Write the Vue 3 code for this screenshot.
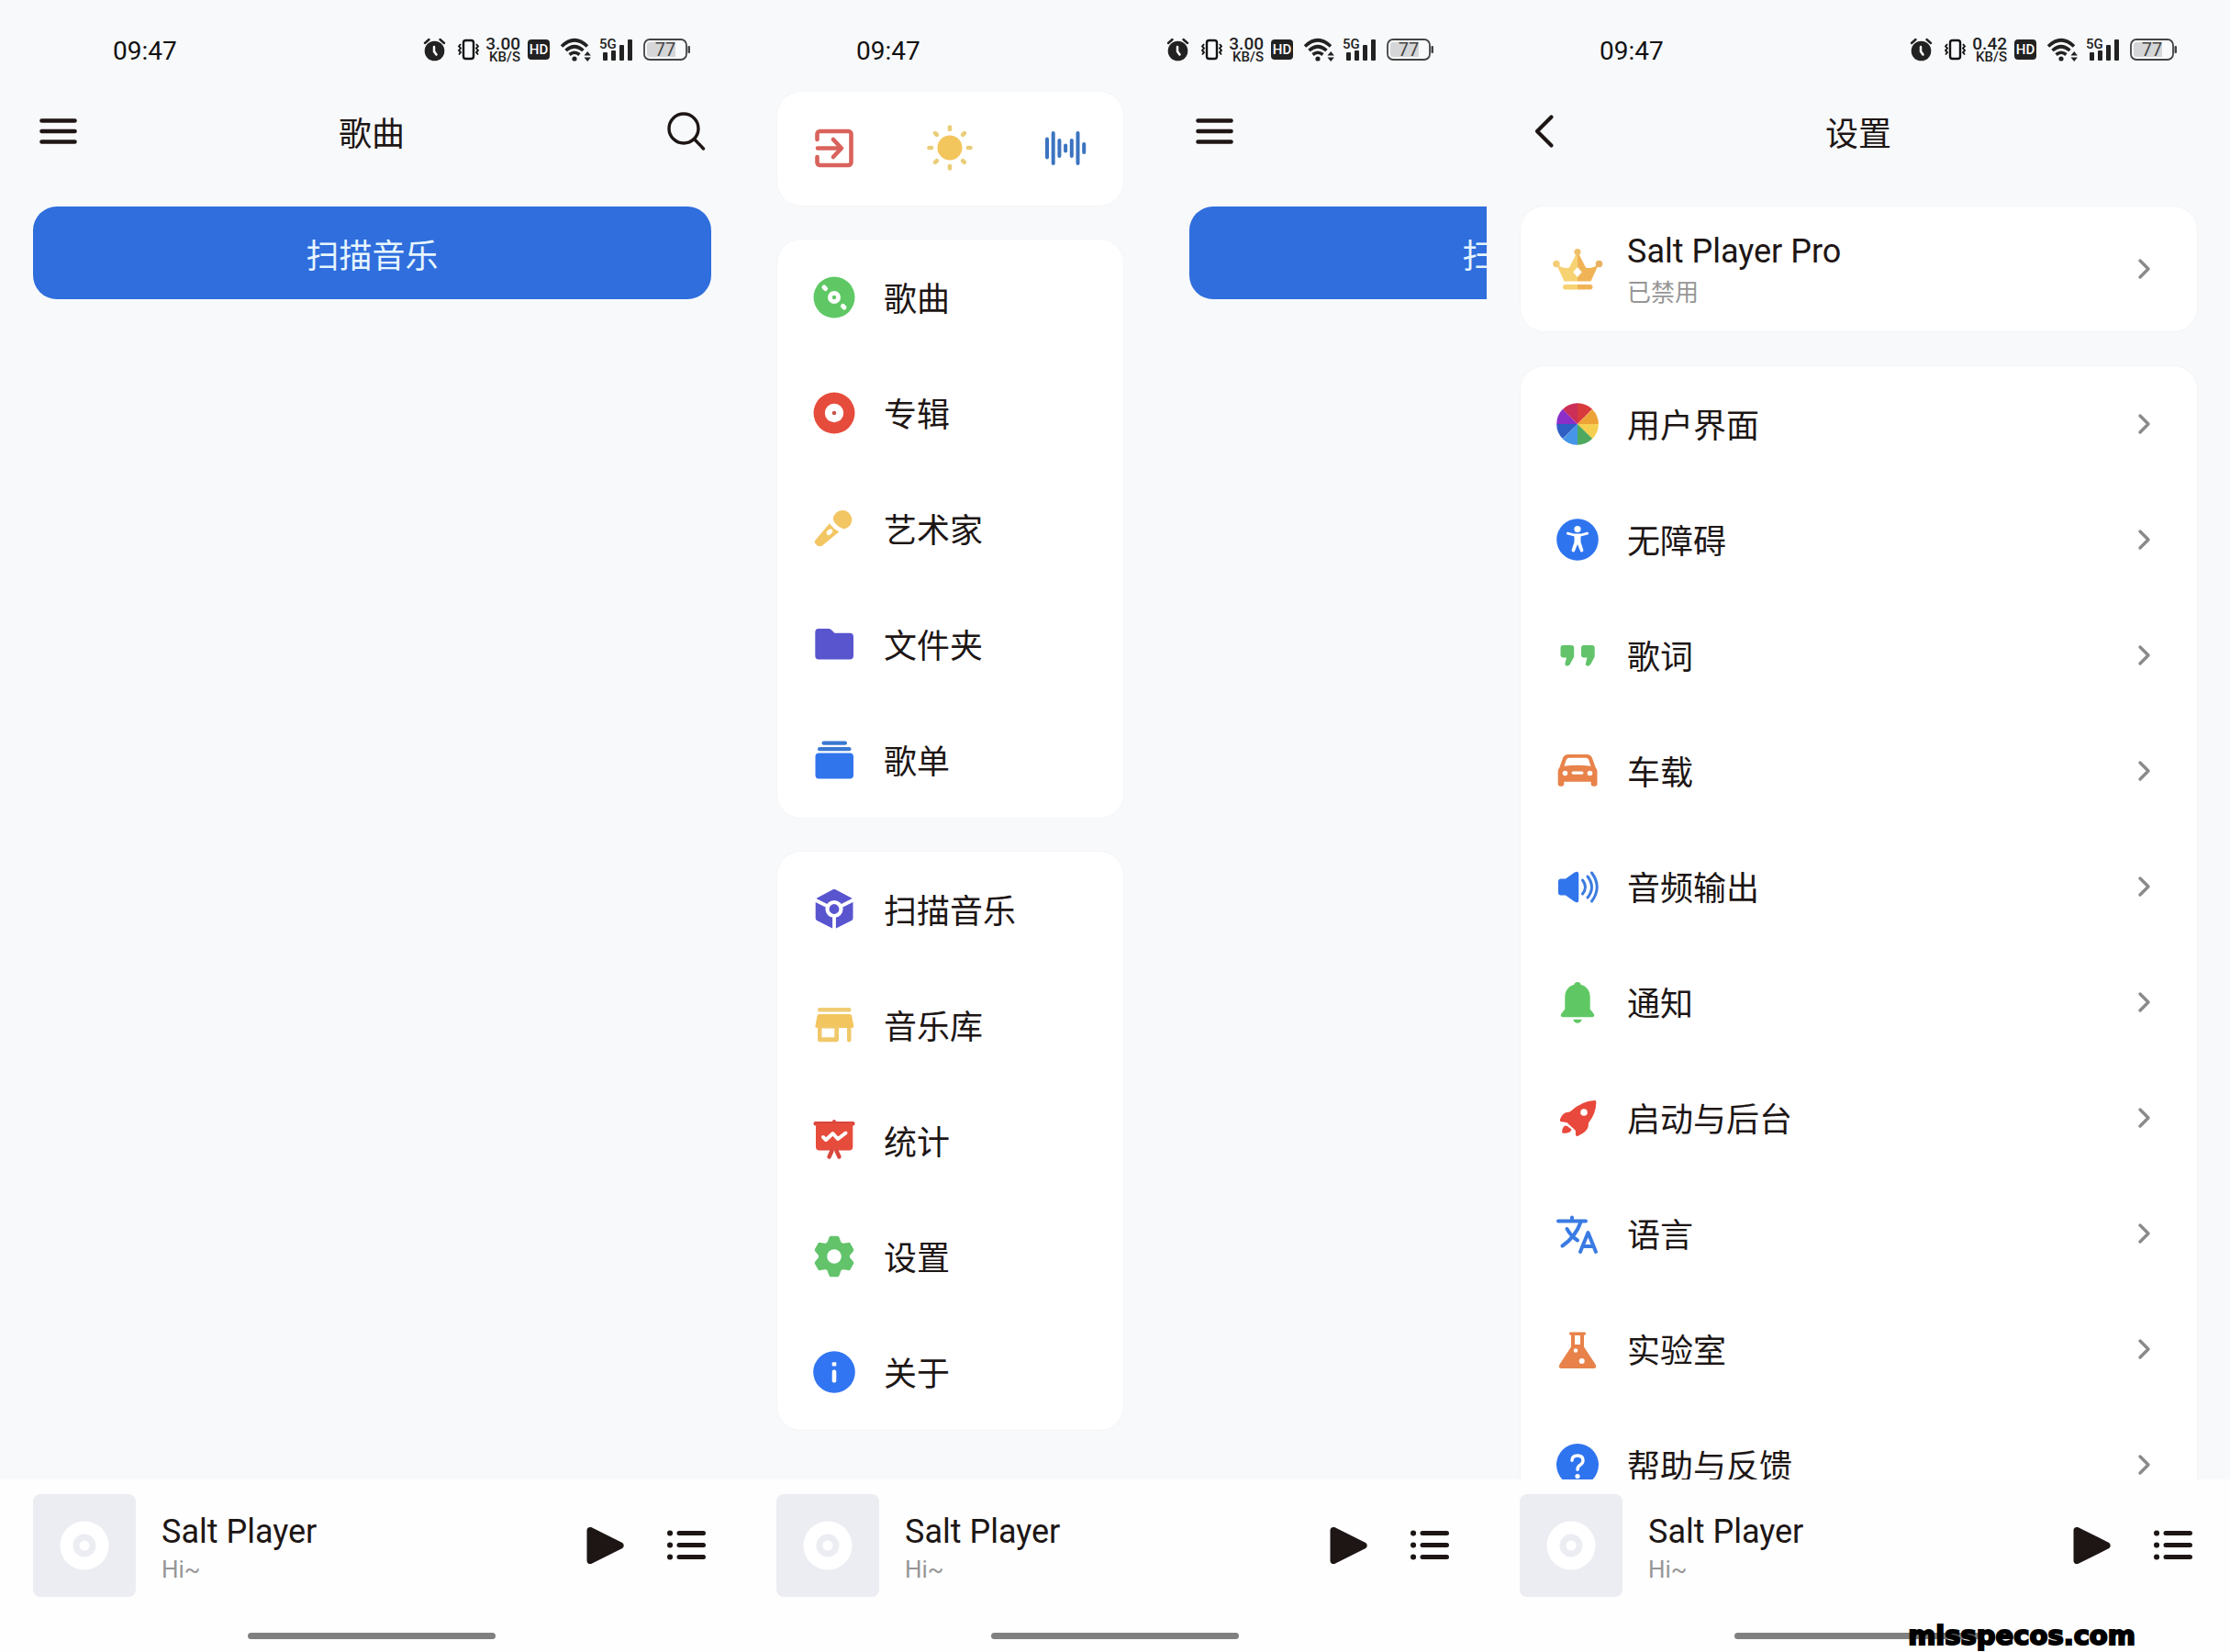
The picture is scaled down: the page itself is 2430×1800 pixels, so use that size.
<script setup>
const phones = [
  { id: 'songs', speed: '3.00' },
  { id: 'drawer', speed: '3.00' },
  { id: 'settings', speed: '0.42' },
]

const quickActions = [
  { icon: 'exit', label: '退出' },
  { icon: 'sun', label: '主题' },
  { icon: 'wave', label: '音效' },
]

const drawerGroups = [
  [
    { icon: 'song', label: '歌曲' },
    { icon: 'album', label: '专辑' },
    { icon: 'mic', label: '艺术家' },
    { icon: 'folder', label: '文件夹' },
    { icon: 'playlist', label: '歌单' },
  ],
  [
    { icon: 'scan', label: '扫描音乐' },
    { icon: 'library', label: '音乐库' },
    { icon: 'stats', label: '统计' },
    { icon: 'gear', label: '设置' },
    { icon: 'info', label: '关于' },
  ],
]

const settings = [
  { icon: 'wheel', label: '用户界面' },
  { icon: 'access', label: '无障碍' },
  { icon: 'quote', label: '歌词' },
  { icon: 'car', label: '车载' },
  { icon: 'speaker', label: '音频输出' },
  { icon: 'bell', label: '通知' },
  { icon: 'rocket', label: '启动与后台' },
  { icon: 'lang', label: '语言' },
  { icon: 'lab', label: '实验室' },
  { icon: 'help', label: '帮助与反馈' },
]

const spin = (step, count, shape) =>
  Array.from({ length: count }, (_, i) => `<g transform="rotate(${i * step} 23 23)">${shape}</g>`).join('')

const wheelColors = ['#d93a3c', '#eda236', '#f7cf50', '#4fa860', '#4596e8', '#2f5fc4', '#8c2fc9', '#cb2f57']
const waveHeights = [24, 37, 21, 10, 21, 37, 13]

// Every icon is drawn in a 46 x 46 box.
const icons = {
  exit: `<g fill="none" stroke="#d9635c" stroke-width="4.6" stroke-linecap="round" stroke-linejoin="round">
    <path d="M4.5 14V8a3 3 0 0 1 3-3h31a3 3 0 0 1 3 3v31a3 3 0 0 1-3 3h-31a3 3 0 0 1-3-3v-6"/>
    <path d="M5 23.5H30M22 14l9 9.500-9 9.500"/></g>`,
  sun: `<circle cx="23" cy="23" r="13.500" fill="#f3c55d"/>` +
    spin(45, 8, '<path d="M23 0.500v2.500" stroke="#e9cd78" stroke-width="4.600" stroke-linecap="round"/>'),
  wave: waveHeights
    .map((h, i) => `<rect x="${1 + i * 6.7}" y="${23.5 - h / 2}" width="4" height="${h}" rx="2" fill="#3b74c0"/>`)
    .join(''),
  song: `<circle cx="23" cy="23" r="22.5" fill="#5fc864"/><circle cx="23" cy="23" r="7" fill="#fff"/><circle cx="23" cy="23" r="2.2" fill="#5fc864"/>
    <path d="M12 12l1.500 1.500M32.500 32.500l1.500 1.500" stroke="#fff" stroke-width="5" stroke-linecap="round"/>`,
  album: `<circle cx="23" cy="23" r="22.5" fill="#e64c3c"/><circle cx="23" cy="23" r="10.2" fill="#fff"/><circle cx="23" cy="23" r="2.3" fill="#c9554b"/>`,
  mic: `<path d="M21.800 12.200A10.300 10.300 0 1 1 35 23.200C30.500 23.500 22.500 17.500 21.800 12.200Z" fill="#f2c662"/>
    <path d="M18 17.200Q22 23.500 28.500 26.200L11 40.800Q7.500 43.800 4 41T2.500 35.500Z" fill="#f2c662"/>
    <ellipse cx="18" cy="26.700" rx="3.800" ry="2.600" transform="rotate(-45 18 26.700)" fill="#fff"/>`,
  folder: `<path d="M6 6h11q2 0 3.500 1.700L23.500 10.700H40q4 0 4 4V35.500q0 4-4 4H6q-3.700 0-3.700-4V10Q2.300 6 6 6Z" fill="#5955cf"/>`,
  playlist: `<rect x="9.500" y="2.500" width="27.500" height="4.300" rx="2.100" fill="#3a78d0"/><rect x="5" y="9" width="36.500" height="4.300" rx="2.100" fill="#3a78d0"/>
    <rect x="2.500" y="15.500" width="41.500" height="28" rx="4" fill="#3175ec"/>`,
  scan: `<path d="M21.500 1.200q1.500-.8 3 0L42 10.500q1.500.8 1.500 2.400V32.500q0 1.600-1.500 2.400L24.500 43.700q-1.500.8-3 0L4.200 34.900Q2.700 34.100 2.700 32.500V12.900q0-1.600 1.500-2.400Z" fill="#5955cf"/>
    <path d="M1 12L16 19.500M45 12L30 19.500M23 30V46" stroke="#fff" stroke-width="3.800"/>
    <circle cx="23" cy="22.500" r="7.500" fill="#5955cf" stroke="#fff" stroke-width="4.200"/>`,
  library: `<rect x="5" y="4" width="36.500" height="4.600" rx="2.200" fill="#efcb73"/>
    <path d="M6.500 11H40q1.700 0 2 1.500L44.300 24q.2 2-1.800 2H4.200q-2 0-1.800-2L4.600 12.500Q5 11 6.500 11Z" fill="#f3c55f"/>
    <path fill-rule="evenodd" d="M5 24H28V38.500q0 2.700-2.700 2.700H7.700Q5 41.200 5 38.500ZM9.500 26.500V36.300H23.300V26.500Z" fill="#f0c869"/>
    <path d="M37 25h4.500V39.200a2.200 2.200 0 0 1-4.500 0Z" fill="#f0c869"/>`,
  stats: `<rect x=".5" y="2" width="45" height="4.500" rx="2" fill="#d9473c"/><rect x="21" y="0" width="4" height="4" rx="2" fill="#d9473c"/>
    <path d="M3 4H43.300V29.500q0 4-4 4H7q-4 0-4-4Z" fill="#e64c3c"/>
    <path d="M20.500 34L17.500 40.500M25.500 34L28.500 40.500" stroke="#d9473c" stroke-width="4.400" stroke-linecap="round"/>
    <path d="M11 19l3 3 7.500-7 5.500 6 8.500-6.500" fill="none" stroke="#fff" stroke-width="4" stroke-linecap="round" stroke-linejoin="round"/>`,
  gear: `<circle cx="23" cy="23" r="17" fill="#62c36a"/>` +
    spin(60, 6, '<path d="M15 9L17.500 2.300Q18 .7 19.500.7H26.500Q28 .7 28.500 2.300L31 9Z" fill="#62c36a"/>') +
    `<circle cx="23" cy="23" r="7.8" fill="#fff"/>`,
  info: `<circle cx="23" cy="23" r="22.800" fill="#3175f2"/><rect x="20.700" y="12.300" width="4.600" height="4.200" rx="1" fill="#fff"/><rect x="20.700" y="20.500" width="4.600" height="14" rx="2" fill="#fff"/>`,
  wheel: wheelColors
    .map((c, i) => `<path d="M23 23V.2A22.800 22.800 0 0 1 39.130 6.870Z" fill="${c}" transform="rotate(${i * 45} 23 23)"/>`)
    .join(''),
  access: `<circle cx="23" cy="23" r="22.800" fill="#2f74ef"/><circle cx="23" cy="11.500" r="3.600" fill="#fff"/>
    <path d="M12.300 16.200l7 1.800h7.400l7-1.800" fill="none" stroke="#fff" stroke-width="2.800" stroke-linecap="round" stroke-linejoin="round"/>
    <path d="M19.500 17h7v8.500L29.300 34a1.800 1.800 0 0 1-3.400 1.200L23 28l-2.900 7.200A1.800 1.800 0 0 1 16.700 34l2.800-8.500Z" fill="#fff"/>`,
  quote: `<path d="M7.500 12H16.200q3 0 3 3V24.500L15 32.600q-1.500 2.600-4.300 1.900-2-.8-1.200-3L11 25.500H7.500q-3 0-3-3V15q0-3 3-3Z" fill="#62c36a"/>
    <path d="M30 12H38.700q3 0 3 3V24.500L37.500 32.600q-1.500 2.600-4.300 1.900-2-.8-1.200-3L33.500 25.500H30q-3 0-3-3V15q0-3 3-3Z" fill="#62c36a"/>`,
  car: `<path fill-rule="evenodd" d="M13 5H33q4.500 0 6 4l3.800 10.500q1.700 1.500 1.700 4V37a2.800 2.800 0 0 1-2.800 2.800H40.500A2.800 2.800 0 0 1 37.700 37V34.800H8.300V37a2.800 2.800 0 0 1-2.800 2.800H4.500A2.800 2.800 0 0 1 1.700 37V23.500q0-2.500 1.600-4L7 9Q8.500 5 13 5ZM14 8.800Q11.500 8.800 10.700 11L8.500 17.800Q23 15.800 37.500 17.800L35.300 11Q34.500 8.800 32 8.800Z" fill="#e8824a"/>
    <circle cx="9.500" cy="25.500" r="2.800" fill="#fff"/><circle cx="36.500" cy="25.500" r="2.800" fill="#fff"/><rect x="16.500" y="23.500" width="13" height="3.200" rx="1.600" fill="#fff"/>`,
  speaker: `<path d="M5 14.500H10L19.500 7.800Q24.300 5 24.300 9.500V37.500q0 4.500-4.800 1.700L10 32.500H5q-3 0-3-3v-12q0-3 3-3Z" fill="#3175ec"/>
    <path d="M28.500 16q6 7.500 0 15M34 12q9 11.500 0 23M38.500 8q11.500 15.500 0 31" fill="none" stroke="#3b7be0" stroke-width="3" stroke-linecap="round"/>`,
  bell: `<circle cx="23" cy="4.500" r="3.600" fill="#5fc864"/>
    <path d="M23 3.500C31.500 3.500 36.700 9.500 36.700 17V30.500L40.600 35.500q2 3.300-1.600 3.800H7q-3.600-.5-1.600-3.800L9.300 30.500V17C9.300 9.500 14.500 3.500 23 3.500Z" fill="#5fc864"/>
    <path d="M18.300 41.800h9.400q-1 4-4.700 4t-4.700-4Z" fill="#5fc864"/>`,
  rocket: `<path d="M41.500 4q2-.1 1.900 1.900Q43.200 18 35 28.500l-.4 4.200Q33.500 38 23.500 42.700q-2.300.8-2.500-1.500l-.2-4.500-9.500-8.700-5.500-.7Q3.200 27 4 24.600 6.500 17 13.500 16.800L16 15.500Q27 5 41.500 4Z" fill="#e8493c"/>
    <circle cx="30" cy="17" r="3.800" fill="#fff"/>
    <path d="M9.500 31.500q3 .3 3.600 1.500l3.400 2.500q-1.300 4.700-9 4.300-1.700-.2-1.300-1.900.2-4.500 3.300-6.400Z" fill="#e8493c"/>`,
  lang: `<g fill="none" stroke="#3a7be3" stroke-width="4" stroke-linecap="round" stroke-linejoin="round">
    <path d="M2 9.500H32M17 5.500v3M26.500 10.500Q21 26.500 6.500 36.500M11.500 18Q16 26 23 30.500"/>
    <path d="M26 43L34.500 22L43 43M29 37H40"/></g>`,
  lab: `<path fill-rule="evenodd" d="M15.500 4.500h15a1.600 1.600 0 0 1 0 3.200H30V20.500L42.500 39.500q2 4.500-2 4.500h-35q-4 0-2-4.500L16 20.500V7.700h-.5a1.600 1.600 0 0 1 0-3.200ZM20 8V18H26V8Z" fill="#e8824a"/>
    <circle cx="21" cy="24.500" r="2.200" fill="#fff"/><circle cx="27.700" cy="36" r="3" fill="#fff"/>`,
  help: `<circle cx="23" cy="23" r="23" fill="#2f74ef"/>
    <path d="M17 18.200q0-5.200 6-5.200t6 5.200q0 3-3 5t-3 5" fill="none" stroke="#fff" stroke-width="3.400" stroke-linecap="round"/><circle cx="23" cy="35.500" r="2.600" fill="#fff"/>`,
  crown: `<path d="M23 4V36.500H8.500L0 18Q8 23.500 14 21.500Z" fill="#f7d273"/><path d="M23 4V36.500H37.500L46 18Q38 23.500 32 21.500Z" fill="#f0b457"/>
    <circle cx="23" cy="4.500" r="3.600" fill="#efc06a"/><circle cx="0" cy="17.500" r="3.800" fill="#f5cd78"/><circle cx="46.500" cy="17.500" r="3.800" fill="#e9b263"/>
    <path d="M23 40H9.800a2.700 2.700 0 0 0 0 5.400H23Z" fill="#f7d273"/><path d="M23 40H36.800a2.700 2.700 0 0 1 0 5.400H23Z" fill="#f0b457"/>
    <path d="M23 21l4.800 5.500L23 32l-4.800-5.500Z" fill="#fff"/>`,
}
</script>

<template>
  <div class="page">
    <section v-for="phone in phones" :key="phone.id" class="phone">
      <header class="status">
        <time class="clock">09:47</time>
        <div class="indicators">
          <svg width="26" height="26" viewBox="0 0 26 26">
            <circle cx="12.500" cy="14.500" r="10.800" fill="#222" />
            <path d="M2 6l4.500-4M23 6l-4.500-4" stroke="#222" stroke-width="2.500" stroke-linecap="round" />
            <path d="M12 10v5l2.500 3.500" fill="none" stroke="#fff" stroke-width="2.500" stroke-linecap="round" />
          </svg>
          <svg width="26" height="26" viewBox="0 0 26 26" fill="none" stroke="#111">
            <rect x="10" y="3" width="11" height="20" rx="2.500" stroke-width="2.400" />
            <path d="M7 7l-2 2.500 2 2-2 2.500 2 2-2 2.500M24 7l2 2.500-2 2 2 2.500-2 2 2 2.500" stroke-width="1.800" />
          </svg>
          <div class="speed"><span>{{ phone.speed }}</span><small>KB/S</small></div>
          <span class="hd">HD</span>
          <svg width="38" height="26" viewBox="0 0 38 26">
            <path d="M5 9.500Q19 -4 33 9.500M9.500 14Q19 5.500 28.500 14M13.500 18.500Q19 14 24.500 18.500" fill="none" stroke="#222" stroke-width="3.600" />
            <circle cx="19" cy="23" r="2.600" fill="#222" />
            <path d="M29.500 19.500l3.700-4.500 3.700 4.500ZM29.500 21.500l3.700 4.500 3.700-4.500Z" fill="#222" />
          </svg>
          <svg width="40" height="26" viewBox="0 0 40 26" fill="#222">
            <text x="0" y="12" class="net">5G</text>
            <rect x="4" y="16" width="5" height="9" rx="1" />
            <rect x="13" y="14" width="5" height="11" rx="1" />
            <rect x="22" y="8" width="5" height="17" rx="1" />
            <rect x="31" y="2" width="5" height="23" rx="1" />
          </svg>
          <svg width="52" height="26" viewBox="0 0 52 26">
            <rect x="1" y="2" width="46" height="22" rx="6" fill="none" stroke="#444" stroke-width="1.800" />
            <path d="M7 5H35V21H7Q4 21 4 18V8Q4 5 7 5Z" fill="#d5d6d8" />
            <rect x="48.500" y="9" width="2.500" height="8" rx="1" fill="#444" />
            <text x="24" y="20" text-anchor="middle" class="level">77</text>
          </svg>
        </div>
      </header>

      <div class="body">
        <nav v-if="phone.id === 'drawer'" class="drawer">
          <div class="card quick">
            <button v-for="a in quickActions" :key="a.icon" type="button" :aria-label="a.label">
              <svg class="icon" viewBox="0 0 46 46" v-html="icons[a.icon]" />
            </button>
          </div>
          <ul v-for="(group, i) in drawerGroups" :key="i" class="card">
            <li v-for="item in group" :key="item.icon">
              <button type="button" class="row">
                <svg class="icon" viewBox="0 0 46 46" v-html="icons[item.icon]" />
                <span class="label">{{ item.label }}</span>
              </button>
            </li>
          </ul>
        </nav>

        <main v-if="phone.id !== 'settings'" class="screen">
          <div class="appbar">
            <button type="button" aria-label="菜单">
              <svg width="54" height="54" viewBox="0 0 54 54" stroke="#1d1615" stroke-width="4.600" stroke-linecap="round">
                <path d="M9.500 15.500H45.500M9.500 27H45.500M9.500 38.500H45.500" />
              </svg>
            </button>
            <h1 v-if="phone.id === 'songs'">歌曲</h1>
            <button type="button" aria-label="搜索">
              <svg width="54" height="54" viewBox="0 0 54 54" fill="none" stroke="#1d1615" stroke-width="3.400" stroke-linecap="round">
                <circle cx="25" cy="24" r="16" />
                <path d="M37 36l9.500 10" />
              </svg>
            </button>
          </div>
          <button type="button" class="scan">扫描音乐</button>
        </main>

        <main v-else class="screen">
          <div class="appbar">
            <button type="button" aria-label="返回">
              <svg width="54" height="54" viewBox="0 0 54 54" fill="none" stroke="#1d1615" stroke-width="4.200" stroke-linecap="round" stroke-linejoin="round">
                <path d="M34.500 11.500L19 27l15.500 15.500" />
              </svg>
            </button>
            <h1>设置</h1>
            <span class="spacer"></span>
          </div>
          <div class="list">
            <div class="card">
              <button type="button" class="row pro">
                <svg class="icon" viewBox="0 0 46 46" v-html="icons.crown" />
                <span class="label two">Salt Player Pro<small>已禁用</small></span>
                <svg class="chevron" viewBox="0 0 14 22"><path d="M2 2l9 9-9 9" /></svg>
              </button>
            </div>
            <ul class="card">
              <li v-for="item in settings" :key="item.icon">
                <button type="button" class="row">
                  <svg class="icon" viewBox="0 0 46 46" v-html="icons[item.icon]" />
                  <span class="label">{{ item.label }}</span>
                  <svg class="chevron" viewBox="0 0 14 22"><path d="M2 2l9 9-9 9" /></svg>
                </button>
              </li>
            </ul>
          </div>
        </main>
      </div>

      <footer class="player">
        <div class="now">
          <svg class="cover" viewBox="0 0 112 112">
            <rect width="112" height="112" rx="8" fill="#ecedf2" />
            <circle cx="56" cy="56" r="26.500" fill="#fff" />
            <circle cx="56" cy="56" r="12.500" fill="#ecedf2" />
            <circle cx="56" cy="56" r="5.500" fill="#fff" />
          </svg>
          <div class="track">Salt Player<small>Hi~</small></div>
          <button type="button" aria-label="播放">
            <svg width="54" height="54" viewBox="0 0 54 54">
              <path d="M9 10.500V43.500Q9 46 12 45.500L45 29Q47.500 27 45 25L12 8.500Q9 8 9 10.500Z" fill="#1d1615" stroke="#1d1615" stroke-width="3" stroke-linejoin="round" />
            </svg>
          </button>
          <button type="button" aria-label="播放列表">
            <svg width="54" height="54" viewBox="0 0 54 54" stroke="#1d1615" stroke-width="5" stroke-linecap="round">
              <path d="M20 13.500H46.500M20 26.500H46.500M20 39.500H46.500" />
              <path d="M10 13.500h.1M10 26.500h.1M10 39.500h.1" stroke-width="6" />
            </svg>
          </button>
        </div>
        <div class="home"></div>
      </footer>
    </section>
    <div class="mark">misspecos.com</div>
  </div>
</template>

<style>
body {
  margin: 0;
}
</style>

<style scoped>
.page {
  position: relative;
  display: grid;
  grid-template-columns: repeat(3, minmax(0, 1fr));
  height: 100vh;
  background: #f8f9fb;
  color: #1d1615;
  font-family: Roboto, "Noto Sans CJK SC", sans-serif;
  font-size: 36px;
}
.phone {
  display: flex;
  flex-direction: column;
  min-height: 0;
  overflow: hidden;
}
button {
  display: block;
  padding: 0;
  border: 0;
  background: none;
  color: inherit;
  font: inherit;
  text-align: left;
}
svg {
  display: block;
  flex: none;
  overflow: visible;
}
ul {
  margin: 0;
  padding: 0;
  list-style: none;
}

.status {
  display: flex;
  flex: none;
  align-items: center;
  justify-content: space-between;
  box-sizing: border-box;
  height: 100px;
  padding: 8px 57px 0 123px;
}
.clock {
  padding-top: 2px;
  color: #111;
  font-size: 28px;
}
.indicators {
  display: flex;
  align-items: center;
  gap: 8px;
  color: #222;
}
.speed {
  display: flex;
  flex-direction: column;
  align-items: flex-end;
  width: 38px;
  padding-top: 2px;
  font-size: 19px;
  font-weight: 500;
  line-height: 14px;
}
.speed small {
  font-size: 15px;
}
.hd {
  width: 24px;
  border-radius: 4px;
  background: #222;
  color: #fff;
  font-size: 15px;
  font-weight: 500;
  line-height: 22px;
  text-align: center;
}
.net {
  font-size: 15px;
  font-weight: 500;
}
.level {
  fill: #444;
  font-size: 20px;
}

.body {
  display: flex;
  flex: 1;
  min-height: 0;
  overflow: hidden;
}
.drawer {
  display: flex;
  flex: none;
  flex-direction: column;
  gap: 37px;
  box-sizing: border-box;
  width: 450px;
  padding: 0 36px 0 37px;
}
.card {
  border-radius: 26px;
  background: #fff;
  box-shadow: 0 0 0 1px #f4f5f7;
}
.quick {
  display: flex;
  justify-content: space-between;
  padding: 38px 40px 40px 39px;
}
.icon {
  width: 46px;
  height: 46px;
}
.row {
  display: flex;
  align-items: center;
  gap: 31px;
  box-sizing: border-box;
  width: 100%;
  height: 126px;
  padding: 0 50px 0 39px;
}
.label {
  flex: 1;
  padding-top: 5px;
  line-height: 44px;
  white-space: nowrap;
}

.screen {
  flex: none;
  width: 100%;
}
.appbar {
  display: flex;
  align-items: center;
  justify-content: space-between;
  height: 86px;
  padding: 0 36px;
}
.appbar h1 {
  margin: 0;
  padding-top: 8px;
  font-size: 36px;
  font-weight: 400;
  line-height: 44px;
}
.spacer {
  width: 54px;
}
.scan {
  width: calc(100% - 71px);
  height: 101px;
  margin: 39px 35px 0 36px;
  border-radius: 26px;
  background: #2f6edc;
  color: #e6f5ff;
  text-align: center;
}
.list {
  display: flex;
  flex-direction: column;
  gap: 38px;
  padding: 39px 36px 0 37px;
}
.row.pro {
  height: 136px;
}
.label.two {
  padding-top: 7px;
}
.label small,
.track small {
  display: block;
  color: #969696;
  font-size: 26px;
}
.label small {
  line-height: 46px;
}
.chevron {
  width: 14px;
  height: 22px;
  fill: none;
  stroke: #8a8a8a;
  stroke-width: 3.4;
  stroke-linecap: round;
  stroke-linejoin: round;
}

.player {
  display: flex;
  flex: none;
  flex-direction: column;
  justify-content: space-between;
  box-sizing: border-box;
  height: 188px;
  padding: 16px 36px 14px;
  background: #fefefe;
}
.now {
  display: flex;
  align-items: center;
  gap: 34px;
}
.cover {
  width: 112px;
  height: 112px;
}
.track {
  flex: 1;
  margin-left: -6px;
  padding-top: 8px;
  line-height: 44px;
}
.track small {
  line-height: 38px;
}
.home {
  align-self: center;
  width: 270px;
  height: 7px;
  border-radius: 4px;
  background: #808080;
}
.mark {
  position: absolute;
  right: 103px;
  bottom: 0;
  color: #000;
  font-family: "DejaVu Sans", sans-serif;
  font-size: 29px;
  font-weight: 700;
  line-height: 36px;
  -webkit-text-stroke: 2px #000;
}
</style>
